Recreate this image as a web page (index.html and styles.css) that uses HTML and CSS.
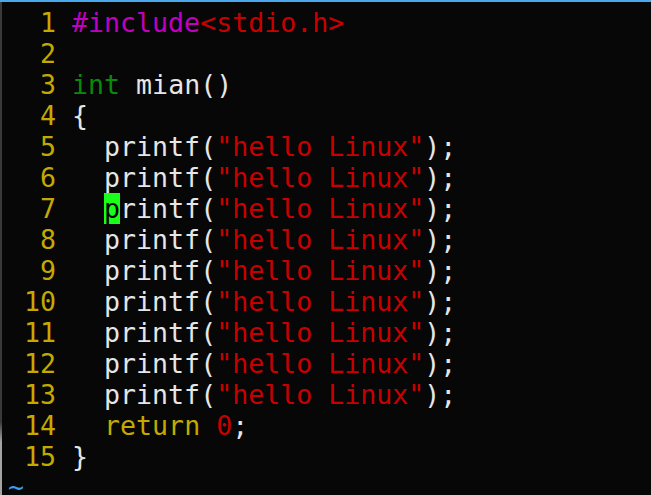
FILE: index.html
```html
<!DOCTYPE html>
<html>
<head>
<meta charset="utf-8">
<link rel="stylesheet" href="styles.css">
</head>
<body>
<div class="term">
  <div class="ln"><span class="nr">  1 </span><span class="pp">#include</span><span class="str">&lt;stdio.h&gt;</span></div>
  <div class="ln"><span class="nr">  2 </span></div>
  <div class="ln"><span class="nr">  3 </span><span class="ty">int</span> mian()</div>
  <div class="ln"><span class="nr">  4 </span>{</div>
  <div class="ln"><span class="nr">  5 </span>  printf(<span class="str">"hello Linux"</span>);</div>
  <div class="ln"><span class="nr">  6 </span>  printf(<span class="str">"hello Linux"</span>);</div>
  <div class="ln"><span class="nr">  7 </span>  <span class="cur">p</span>rintf(<span class="str">"hello Linux"</span>);</div>
  <div class="ln"><span class="nr">  8 </span>  printf(<span class="str">"hello Linux"</span>);</div>
  <div class="ln"><span class="nr">  9 </span>  printf(<span class="str">"hello Linux"</span>);</div>
  <div class="ln"><span class="nr"> 10 </span>  printf(<span class="str">"hello Linux"</span>);</div>
  <div class="ln"><span class="nr"> 11 </span>  printf(<span class="str">"hello Linux"</span>);</div>
  <div class="ln"><span class="nr"> 12 </span>  printf(<span class="str">"hello Linux"</span>);</div>
  <div class="ln"><span class="nr"> 13 </span>  printf(<span class="str">"hello Linux"</span>);</div>
  <div class="ln"><span class="nr"> 14 </span>  <span class="kw">return</span> <span class="str">0</span>;</div>
  <div class="ln"><span class="nr"> 15 </span>}</div>
  <div class="ln last"><span class="tl">~</span></div>
</div>
</body>
</html>
```
FILE: styles.css
```css
html, body {
  margin: 0;
  padding: 0;
  background: #070707;
  overflow: hidden;
}
.term {
  height: 495px;
  border-top: 2px solid #4aa8ec;
  padding: 5px 0 0 8px;
  box-sizing: border-box;
  background:
    linear-gradient(to bottom, #3a3a3a 0, #3a3a3a 420px, #a4a4a4 440px, #a4a4a4 100%) left top / 2px 100% no-repeat,
    #070707;
  color: #e6e6e6;
  font-family: "DejaVu Sans Mono", monospace;
  font-size: 26.6px;
  overflow: hidden;
}
.ln {
  height: 31px;
  line-height: 31px;
  white-space: pre;
}
.ln.last {
  height: 16px;
  line-height: 16px;
  padding-top: 0;
  position: relative;
}
.ln.last .tl {
  position: relative;
  top: 7px;
}
.nr { color: #c4aa00; }
.pp { color: #c000c0; }
.str { color: #c80000; }
.ty { color: #0a8a0a; }
.kw { color: #c4aa00; }
.tl { color: #3a9ff0; }
.cur {
  background: #1aff1a;
  color: #000;
}
```
